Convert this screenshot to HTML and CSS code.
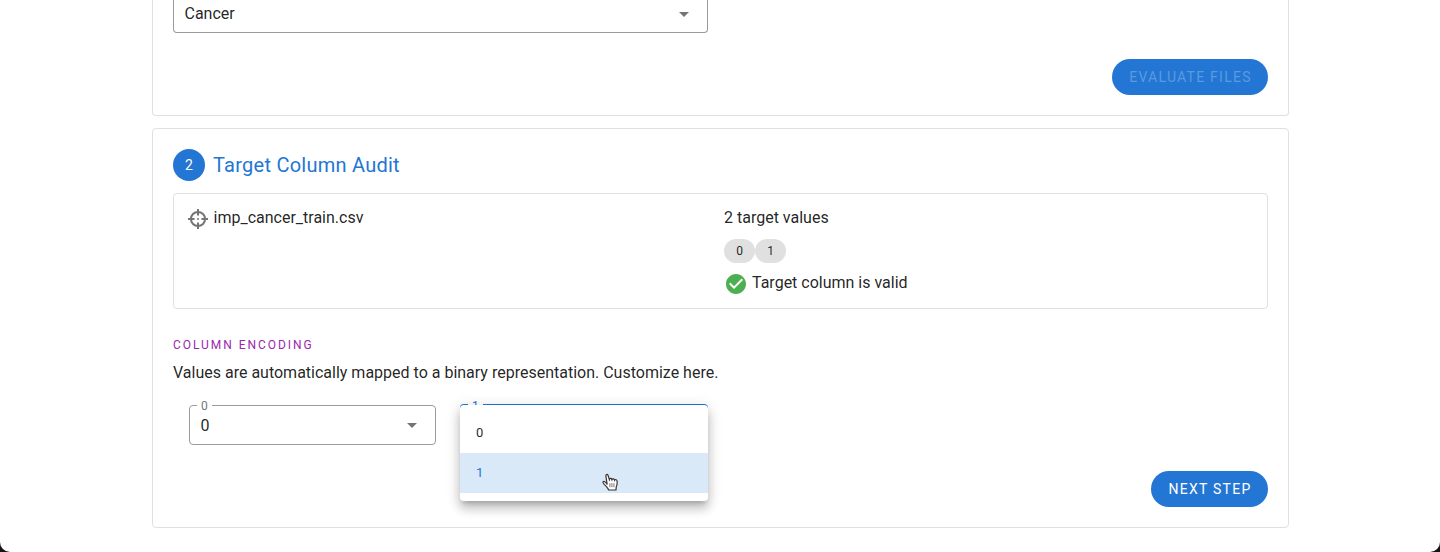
FILE: index.html
```html
<!DOCTYPE html>
<html lang="en">
<head>
<meta charset="utf-8">
<title>Target Column Audit</title>
<link rel="stylesheet" href="styles.css">
</head>
<body>
<main class="window">
  <section class="card card-files">
    <div class="select select-wide"><span>Cancer</span><svg class="arrow" viewBox="0 0 24 24"><path d="M7 10l5 5 5-5z"/></svg></div>
    <div class="actions"><button class="btn btn-disabled" disabled>EVALUATE FILES</button></div>
  </section>
  <section class="card card-audit">
    <header class="step"><span class="badge">2</span><h2 class="title">Target Column Audit</h2></header>
    <div class="panel">
      <div class="file">
        <svg class="target" viewBox="0 0 20 20"><g fill="none" stroke="#757575" stroke-width="2"><circle cx="10" cy="10" r="7.100"/><path d="M10 0v6.500M10 13.500v6.500M0 10h6.500M13.500 10h6.500"/></g><circle cx="10" cy="10" r="1" fill="#757575"/></svg>
        <span>imp_cancer_train.csv</span>
      </div>
      <div class="summary">
        <div class="count">2 target values</div>
        <div class="chips"><span class="chip">0</span><span class="chip">1</span></div>
        <div class="valid"><svg class="check" viewBox="0 0 24 24"><path fill="#4caf50" d="M12 2C6.480 2 2 6.480 2 12s4.480 10 10 10 10-4.480 10-10S17.520 2 12 2zm-2 15l-5-5 1.410-1.410L10 14.170l7.590-7.590L19 8l-9 9z"/></svg><span>Target column is valid</span></div>
      </div>
    </div>
    <div class="overline">COLUMN ENCODING</div>
    <p class="hint">Values are automatically mapped to a binary representation. Customize here.</p>
    <div class="fields">
      <div class="select field"><span class="label">0</span><span class="value">0</span><svg class="arrow" viewBox="0 0 24 24"><path d="M7 10l5 5 5-5z"/></svg></div>
      <div class="select field focused"><span class="label">1</span>
        <ul class="menu"><li class="option">0</li><li class="option selected">1</li></ul>
        <svg class="cursor" viewBox="0 0 17 19"><path fill="#fff" stroke="#333" stroke-width="1.200" stroke-linejoin="round" d="M5.100 11.200 3.900 3.200C3.600 1.400 5.400.8 6.100 2.500L7.400 6.600C7.500 5.200 9.500 5 9.900 6.500 10.500 5.300 12.200 5.700 12.500 7 13.500 6.200 15 6.700 15.100 8.200 15.300 10.300 15.200 12 14.200 14.100L14 17H6.700C6.100 15.300 4.500 13.700 3.200 12.300 1.900 11 .4 9.300 1.200 8.600 2.300 7.700 3.600 9.300 5.100 11.200z"/><path stroke="#666" stroke-width=".9" d="M7.900 10.200v4M9.900 10.200v4M11.900 10.200v4"/><path stroke="#333" stroke-width=".8" d="M7.400 6.600v1.600M9.900 6.500v1.700M12.500 7v1.500"/></svg>
      </div>
    </div>
    <div class="actions actions-next"><button class="btn">NEXT STEP</button></div>
  </section>
</main>
</body>
</html>
```
FILE: styles.css
```css
* { box-sizing: border-box; }
body {
  margin: 0;
  background: #151515;
  color: rgba(0, 0, 0, .87);
  font: 16px/24px Roboto, "Liberation Sans", sans-serif;
}
.window {
  height: 552px;
  overflow: hidden;
  background: #fff;
  border-radius: 0 0 10px 10px;
  padding: 0 151px 0 152px;
  display: flex;
  flex-direction: column;
  gap: 12px;
}
.card {
  border: 1px solid #e0e0e0;
  border-radius: 4px;
  padding: 20px;
}
.card-files {
  height: 116px;
  border-top: 0;
  border-radius: 0 0 4px 4px;
  padding-top: 0;
}
.card-audit { height: 400px; }
.select {
  position: relative;
  display: flex;
  align-items: center;
  justify-content: space-between;
  height: 40px;
  padding: 0 11px 0 10.5px;
  border: 1px solid #9a9a9a;
  border-radius: 4px;
}
.select-wide {
  width: 535px;
  height: 33px;
  border-top: 0;
  border-radius: 0 0 4px 4px;
  padding-bottom: 5px;
}
.value { padding-top: 2px; }
.arrow { width: 24px; height: 24px; fill: #757575; }
.actions { display: flex; justify-content: flex-end; margin-top: 26px; }
.btn {
  height: 36px;
  padding: 0 16px 0 17px;
  border: 0;
  border-radius: 18px;
  background: #2376d3;
  color: #fff;
  font: 14px/36px Roboto, "Liberation Sans", sans-serif;
  letter-spacing: 1.25px;
  width: 117px;
  white-space: nowrap;
}
.btn-disabled { width: 156px; color: #5b9adf; }
.step { display: flex; align-items: center; gap: 8px; }
.badge {
  width: 32px;
  height: 32px;
  border-radius: 50%;
  background: #2376d3;
  color: #fff;
  font-size: 14px;
  line-height: 32px;
  text-align: center;
}
.title {
  margin: 0;
  color: #2376d3;
  font-size: 20px;
  font-weight: 400;
  line-height: 32px;
  letter-spacing: .25px;
}
.panel {
  display: grid;
  grid-template-columns: 536px 1fr;
  height: 116px;
  margin-top: 12px;
  padding: 12px 14px;
  border: 1px solid #e0e0e0;
  border-radius: 4px;
}
.file { display: flex; gap: 6px; height: 24px; margin-left: -.5px; }
.target { width: 20px; height: 20px; margin-top: 3px; }
.chips { display: flex; margin-top: 9px; }
.chip {
  width: 31px;
  height: 24px;
  border-radius: 12px;
  background: #e0e0e0;
  font-size: 12px;
  text-align: center;
}
.valid { display: flex; gap: 4px; margin-top: 8px; }
.check { width: 24px; height: 24px; margin-top: 1px; }
.overline {
  margin-top: 26px;
  color: #9c27b0;
  font-size: 12px;
  line-height: 20px;
  letter-spacing: 1.95px;
}
.hint { margin: 6px 0 0; }
.fields { display: flex; gap: 24px; margin: 20px 0 0 16px; }
.field { width: 247px; }
.label {
  position: absolute;
  top: -9px;
  left: 7px;
  padding: 0 4px;
  background: #fff;
  color: #757575;
  font-size: 12px;
  line-height: 18px;
}
.focused {
  width: 248px;
  height: 41px;
  margin-top: -1px;
  border: 2px solid #2376d3;
}
.focused .label { left: 6px; color: #2376d3; }
.menu {
  position: absolute;
  top: -1px;
  left: -2px;
  width: 248px;
  height: 96px;
  margin: 0;
  padding: 8px 0;
  list-style: none;
  border-radius: 4px;
  background: #fff;
  box-shadow: 0 5px 5px -3px rgba(0,0,0,.2), 0 8px 10px 1px rgba(0,0,0,.14), 0 3px 14px 2px rgba(0,0,0,.12);
}
.option { height: 40px; padding: 0 16px; font-size: 13px; line-height: 40px; }
.selected { background: #dae9f8; color: #2376d3; }
.cursor { position: absolute; left: 140px; top: 67px; width: 17px; height: 19px; }
.actions-next { margin-top: 26px; }
```
